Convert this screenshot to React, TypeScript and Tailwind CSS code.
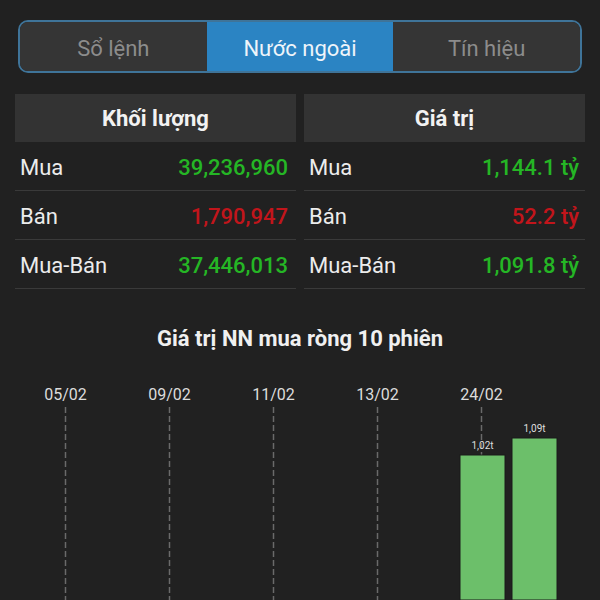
import React from "react";

interface Row {
  label: string;
  value: string;
  up: boolean;
}

const volumeRows: Row[] = [
  { label: "Mua", value: "39,236,960", up: true },
  { label: "Bán", value: "1,790,947", up: false },
  { label: "Mua-Bán", value: "37,446,013", up: true },
];

const valueRows: Row[] = [
  { label: "Mua", value: "1,144.1 tỷ", up: true },
  { label: "Bán", value: "52.2 tỷ", up: false },
  { label: "Mua-Bán", value: "1,091.8 tỷ", up: true },
];

const tabs = ["Sổ lệnh", "Nước ngoài", "Tín hiệu"];

// 10 phiên, khoảng cách 52px; nhãn ngày mỗi 2 phiên
const sessions = [
  { date: "05/02" },
  { date: "" },
  { date: "09/02" },
  { date: "" },
  { date: "11/02" },
  { date: "" },
  { date: "13/02" },
  { date: "" },
  { date: "24/02", bar: 85, label: "1,02t" },
  { date: "", bar: 68, label: "1,09t" },
];

const StatTable = ({ title, rows, padRight }: { title: string; rows: Row[]; padRight: string }) => (
  <div className="flex flex-col">
    <div className="h-[48px] bg-[#333333] flex items-center justify-center text-[22px] font-bold text-[#f2f2f2]">
      {title}
    </div>
    {rows.map((row) => (
      <div
        key={row.label}
        className={`h-[49px] pt-[3px] border-b border-[#3a3a3a] flex items-center justify-between pl-[5px] ${padRight}`}
      >
        <span className="text-[22px] text-[#ececec]">{row.label}</span>
        <span className={`text-[22px] font-medium ${row.up ? "text-[#25b625]" : "text-[#c2151b]"}`}>
          {row.value}
        </span>
      </div>
    ))}
  </div>
);

export default function App() {
  return (
    <div
      className="w-[600px] h-[600px] overflow-hidden bg-[#212121] flex flex-col"
      style={{ fontFamily: "Roboto, 'Noto Sans', sans-serif" }}
    >
      <div className="px-[18px] pt-[20px]">
        <div className="h-[53px] border-2 border-[#3f7499] rounded-[10px] overflow-hidden grid grid-cols-3">
          {tabs.map((t, i) => (
            <div
              key={t}
              className={`flex items-center justify-center pt-[3px] text-[22px] ${
                i === 1 ? "bg-[#2b84c3] text-[#eef4fa]" : "bg-[#353535] text-[#8c8c8c]"
              }`}
            >
              {t}
            </div>
          ))}
        </div>
      </div>

      <div className="px-[15px] pt-[21px] grid grid-cols-2 gap-[8px]">
        <StatTable title="Khối lượng" rows={volumeRows} padRight="pr-[8px]" />
        <StatTable title="Giá trị" rows={valueRows} padRight="pr-[6px]" />
      </div>

      <div className="mt-[36px] text-center text-[22px] leading-[28px] font-bold text-[#f0f0f0]">
        Giá trị NN mua ròng 10 phiên
      </div>

      <svg width="600" height="230" className="mt-[17px] block">
        {sessions.map((s, i) => {
          const cx = 66.5 + i * 52;
          return (
            <g key={i}>
              {s.date && (
                <>
                  <text x={cx - 1} y="29.5" textAnchor="middle" fontSize="16" fill="#dcdcdc">
                    {s.date}
                  </text>
                  <line x1={cx - 1} y1="37" x2={cx - 1} y2="230" stroke="#6a6a6a" strokeWidth="1.5" strokeDasharray="6 3" />
                </>
              )}
              {s.bar !== undefined && (
                <>
                  <text x={cx} y={s.bar - 6} textAnchor="middle" fontSize="10" fill="#dedede">
                    {s.label}
                  </text>
                  <rect x={cx - 22.5} y={s.bar} width="45" height={230 - s.bar} fill="#6cbf6a" stroke="#1a1a1a" strokeWidth="1" />
                </>
              )}
            </g>
          );
        })}
      </svg>
    </div>
  );
}
